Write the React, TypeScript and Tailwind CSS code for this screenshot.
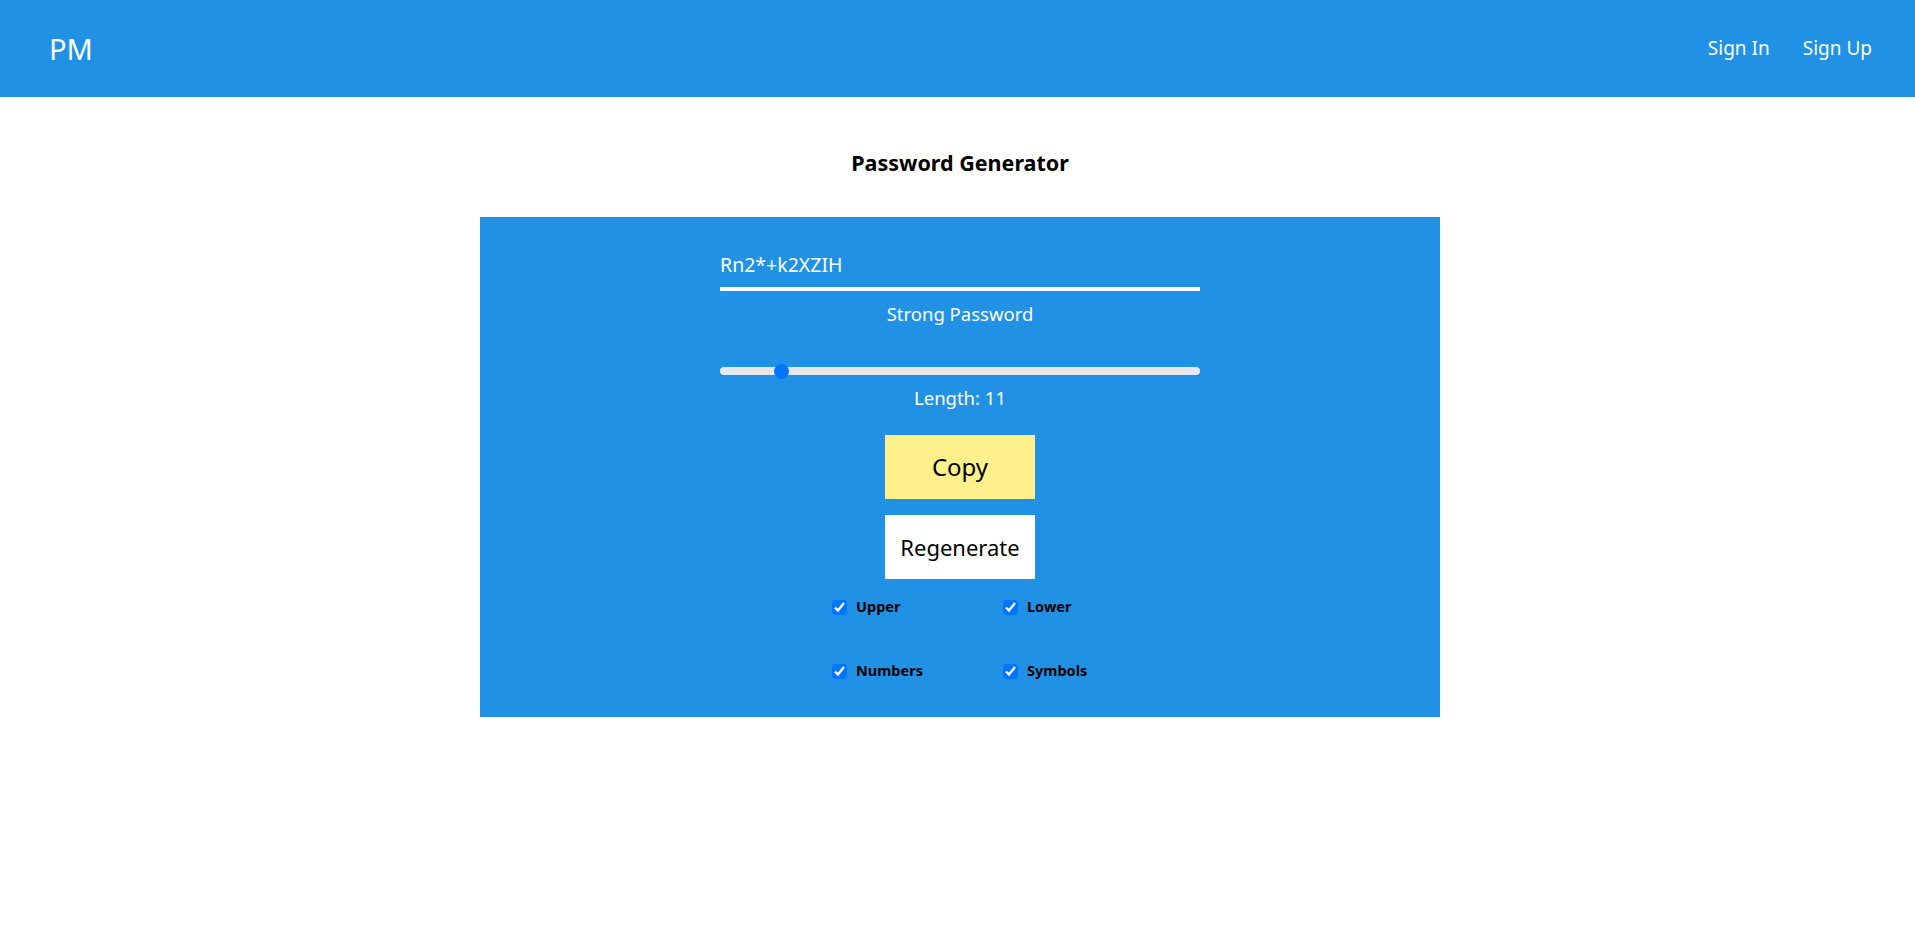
import { useState } from 'react';

const font = { fontFamily: '"Noto Sans", "Open Sans", sans-serif' };

const options = ['Upper', 'Lower', 'Numbers', 'Symbols'];

const App = () => {
  const [length] = useState(11);
  const [checked, setChecked] = useState<Record<string, boolean>>({
    Upper: true,
    Lower: true,
    Numbers: true,
    Symbols: true,
  });

  // 滑块位置 (min 4, max 64)
  const pct = (length - 4) / 60;

  return (
    <div className="min-h-screen bg-white" style={font}>
      <header className="flex h-[97px] items-center justify-between bg-[#2091e4] pl-[49px] pr-[43px] text-white">
        <span className="text-[29px]">PM</span>
        <nav className="flex gap-[33px] text-[19px]">
          <a>Sign In</a>
          <a>Sign Up</a>
        </nav>
      </header>

      <div className="pl-[5px]">
        <h1 className="mt-[51px] text-center text-[21.5px] font-bold leading-[30px] text-black">Password Generator</h1>

        <div className="mx-auto mt-[39px] flex w-[960px] flex-col items-center bg-[#2091e4] pb-[34px] pt-[26px] text-white">
          <div className="w-[480px] border-b-4 border-white py-[7px] text-[19.5px] leading-[30px]">Rn2*+k2XZIH</div>
          <p className="mt-[8px] text-[18.5px] leading-[30px]">Strong Password</p>

          <div className="relative mt-[34px] flex h-4 w-[480px] items-center">
            <div className="h-2 w-full rounded-full bg-[#e5e7eb]" />
            <div
              className="absolute h-[15px] w-[15px] rounded-full bg-[#0075ff]"
              style={{ left: `${pct * 465}px` }}
            />
          </div>
          <p className="mt-[4px] text-[18.5px] leading-[30px]">Length: {length}</p>

          <button className="mt-[22px] h-16 w-[150px] bg-[#fef08a] text-[24px] text-black">Copy</button>
          <button className="mt-4 h-16 w-[150px] bg-white text-[22px] text-black">Regenerate</button>

          <div className="mt-[16px] w-[480px] pl-[112px]">
            <div className="grid grid-cols-[171px_171px] gap-y-[40px]">
              {options.map((o) => (
                <label key={o} className="flex h-6 items-center gap-[9px] text-[14.5px] font-bold text-black">
                  <input
                    type="checkbox"
                    className="m-0 h-[15px] w-[15px]"
                    checked={checked[o]}
                    onChange={(e) => setChecked({ ...checked, [o]: e.target.checked })}
                  />
                  {o}
                </label>
              ))}
            </div>
          </div>
        </div>
      </div>
    </div>
  );
};

export default App;
